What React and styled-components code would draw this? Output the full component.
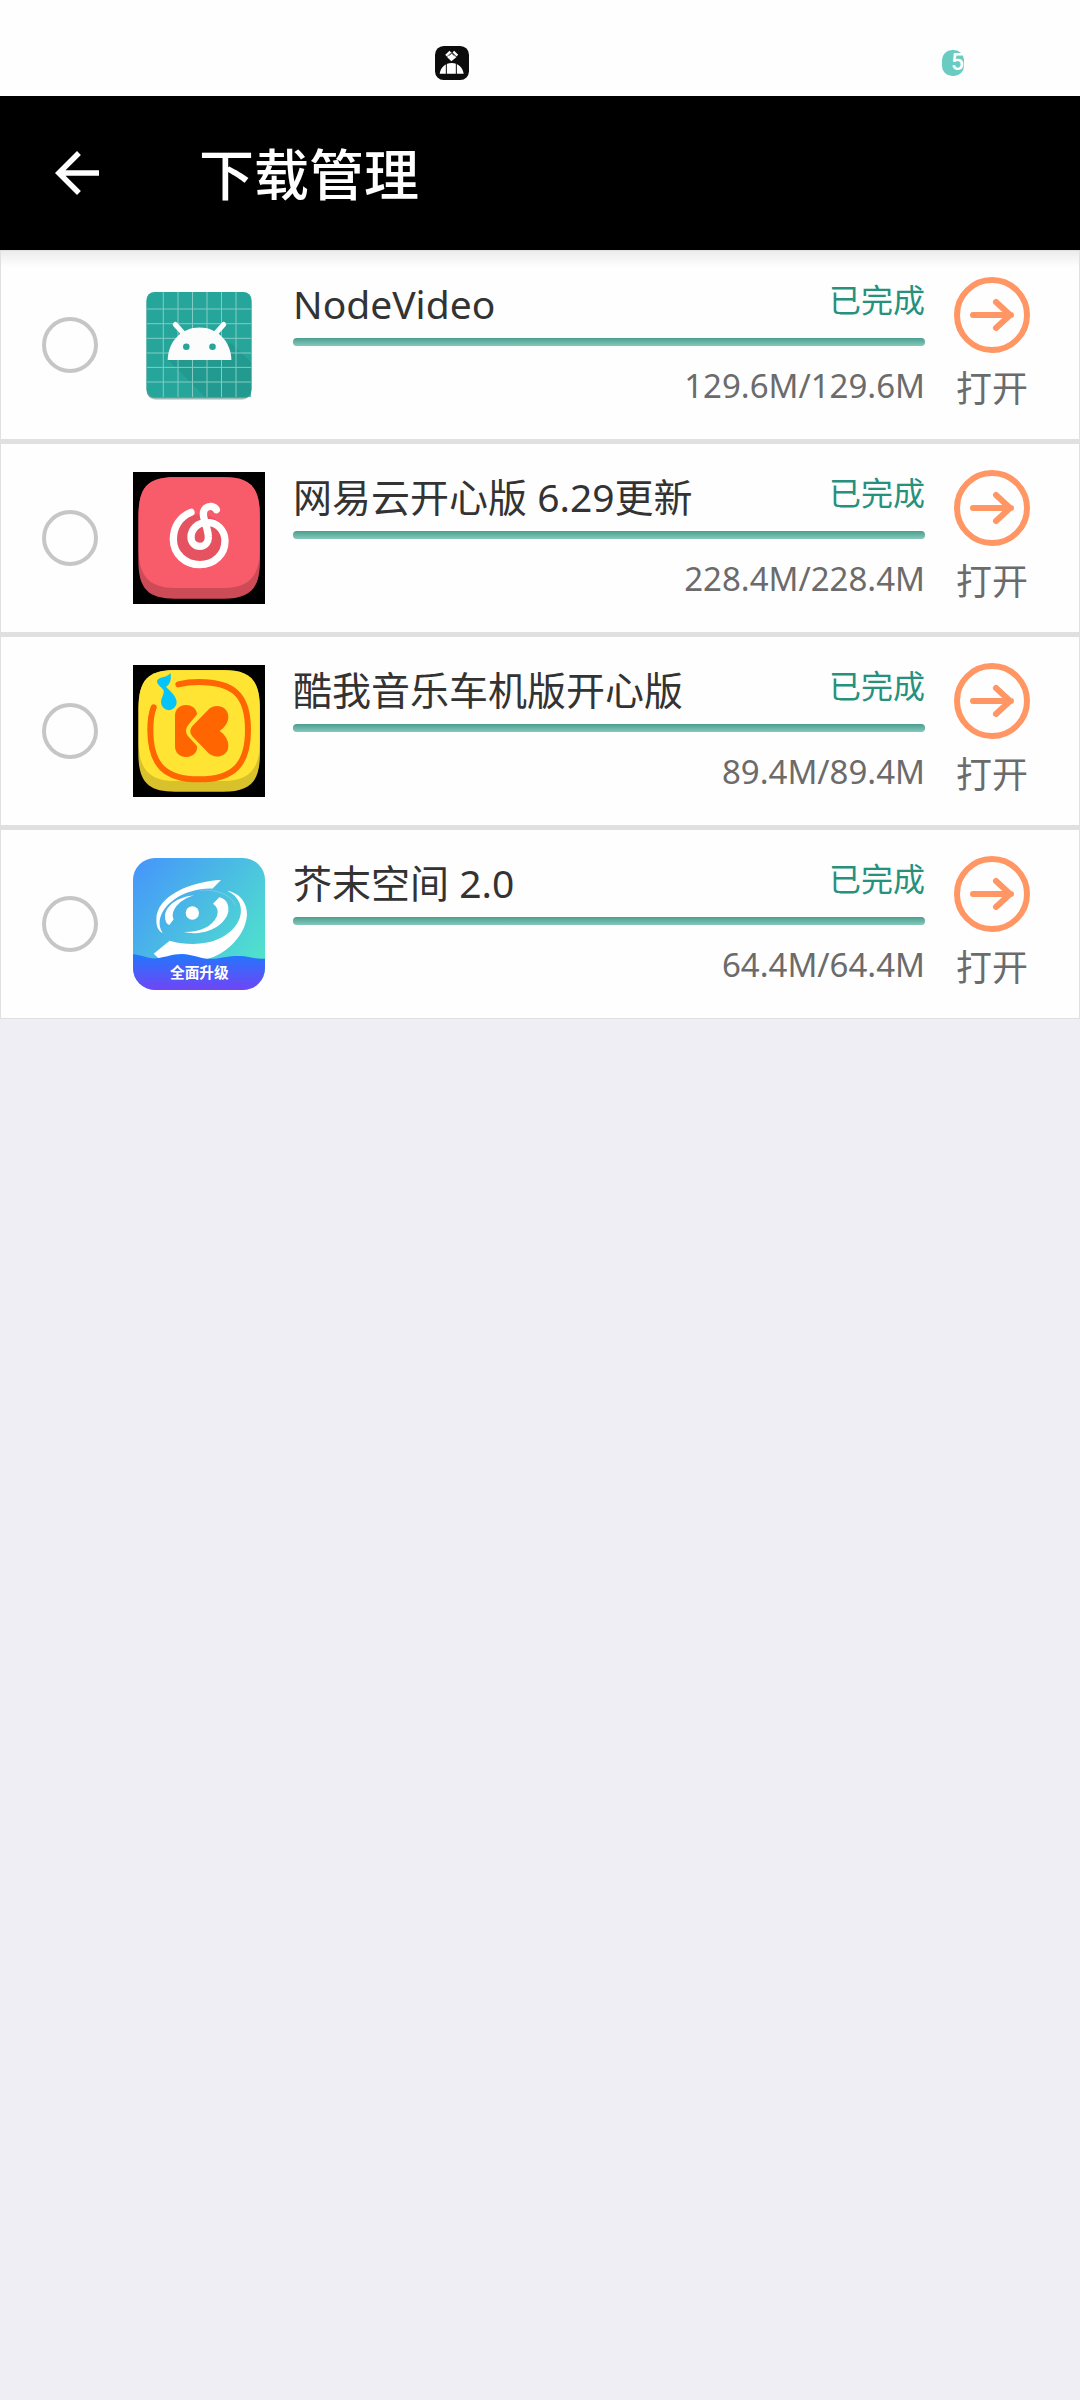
import { useState } from "react"
import styled, { createGlobalStyle } from "styled-components"

const downloads = [
    { id: "nodevideo", nome: "NodeVideo", size: "129.6M", Icon: NodeVideoIcon },
    { id: "netease", nome: "网易云开心版 6.29更新", size: "228.4M", Icon: NeteaseIcon },
    { id: "kuwo", nome: "酷我音乐车机版开心版", size: "89.4M", Icon: KuwoIcon },
    { id: "jiemo", nome: "芥末空间 2.0", size: "64.4M", Icon: JiemoIcon },
]

export default function App() {
    return (
        <>
            <GlobalStyle />
            <StatusBar>
                <NotificationIcon />
                <Battery>5</Battery>
            </StatusBar>
            <Header>
                <BackButton aria-label="返回">
                    <svg width="66" height="66" viewBox="0 0 24 24" fill="#ffffff">
                        <path d="M20 11H7.83l5.59-5.59L12 4l-8 8 8 8 1.41-1.41L7.83 13H20v-2z" />
                    </svg>
                </BackButton>
                <Title>下载管理</Title>
            </Header>
            <List>
                {downloads.map((item) => <DownloadItem key={item.id} {...item} />)}
            </List>
        </>
    )
}

function DownloadItem({ id, nome, size, Icon }) {
    const [checked, setChecked] = useState(false)

    return (
        <Item>
            <Check
                type="checkbox"
                aria-labelledby={id}
                checked={checked}
                onChange={() => setChecked(!checked)}
            />
            <Icon />
            <Info>
                <InfoTop>
                    <Name id={id}>{nome}</Name>
                    <Status>已完成</Status>
                </InfoTop>
                <Progress value="100" max="100" aria-labelledby={id} />
                <Size>{size}/{size}</Size>
            </Info>
            <OpenButton>
                <svg width="78" height="76" viewBox="0 0 78 76" fill="none" stroke="#ff9663" strokeWidth="6" strokeLinecap="round" strokeLinejoin="round">
                    <circle cx="39" cy="38" r="35" />
                    <path d="M20 38H58M43 25L57 38L43 51" />
                </svg>
                打开
            </OpenButton>
        </Item>
    )
}

function NotificationIcon() {
    return (
        <svg width="34" height="34" viewBox="0 0 102 102">
            <rect width="102" height="102" rx="26" fill="#0c0c0c" />
            <path d="M49 19L64 34L49 46L36 33Z" fill="#ffffff" />
            <path d="M33 29L46 17M55 17L67 29" stroke="#ffffff" strokeWidth="7" />
            <path d="M42 29L50 21L58 29" stroke="#0c0c0c" strokeWidth="3" fill="none" />
            <path d="M14 83C17 64 31 51 50 51C69 51 83 64 86 83Z" fill="#ffffff" />
            <path d="M34 52V84M64 52V84" stroke="#0c0c0c" strokeWidth="3" />
        </svg>
    )
}

function NodeVideoIcon() {
    return (
        <AppIcon viewBox="0 0 132 132">
            <rect x="14" y="16" width="104" height="105" rx="9" fill="#000000" opacity="0.15" />
            <rect x="13.5" y="14.5" width="105" height="105" rx="8" fill="#1b7a70" opacity="0.6" />
            <rect x="13.5" y="13" width="105" height="105" rx="8" fill="#26a69a" />
            <path d="M35 81L72 118H118V83L98 64Z" fill="#22958a" opacity="0.7" />
            <path
                d="M30.3 13V118M45 13V118M59.5 13V118M74 13V118M88.5 13V118M103 13V118M14 30H118M14 44.7H118M14 59.3H118M14 74H118M14 88.4H118M14 103H118"
                stroke="#84cbc4"
            />
            <path d="M34.7 81C35 62 49 48.5 66.5 48.5S98 62 98.4 81Z" fill="#fcfcfc" />
            <path d="M42.3 45.5L51 55M90.7 45.5L82 55" stroke="#fcfcfc" strokeWidth="5" strokeLinecap="round" />
            <circle cx="53.3" cy="67.7" r="3.3" fill="#26a69a" />
            <circle cx="79.5" cy="67.7" r="3.3" fill="#26a69a" />
        </AppIcon>
    )
}

function NeteaseIcon() {
    return (
        <AppIcon viewBox="39 36 396 396">
            <rect x="39" y="36" width="396" height="396" fill="#000000" />
            <path d="M55 170C55 80 85 51 165 51H310C390 51 420 80 420 170V300C420 388 390 416 310 416H165C85 416 55 388 55 300Z" fill="#cd4b57" />
            <path d="M56 165C56 80 85 52 165 52H310C390 52 419 80 419 165V270C419 350 385 384 310 384H165C90 384 56 350 56 270Z" fill="#f85c6b" />
            <circle cx="240" cy="243" r="80" fill="#e65360" />
            <path
                d="M213 157C180 170 160 200 160 238C160 282 196 314 240 314C284 314 315 282 315 243C315 210 290 187 262 187C232 187 213 208 213 232C213 248 225 259 240 259C256 259 266 246 265 230C264 205 250 180 250 162C250 146 262 138 274 139C281 140 286 143 289 149"
                fill="none"
                stroke="#ffffff"
                strokeWidth="22"
                strokeLinecap="round"
            />
        </AppIcon>
    )
}

function KuwoIcon() {
    return (
        <AppIcon viewBox="39 45 396 396">
            <rect x="39" y="45" width="396" height="396" fill="#000000" />
            <path d="M55 179C55 89 85 60 165 60H310C390 60 420 89 420 179V309C420 397 390 425 310 425H165C85 425 55 397 55 309Z" fill="#d9c12c" />
            <path d="M56 174C56 89 85 61 165 61H310C390 61 419 89 419 174V279C419 359 385 393 310 393H165C90 393 56 359 56 279Z" fill="#ffe433" />
            <path
                d="M175 103C195 98 215 96 237 96C340 96 384 135 384 240C384 345 340 388 237 388C135 388 91 345 91 240C91 210 94 190 101 172"
                fill="none"
                stroke="#ff6500"
                strokeWidth="18"
                strokeLinecap="round"
            />
            <path d="M165 198C165 177 179 165 198 165C217 165 231 178 231 193L207 222C195 236 195 249 207 262L231 288C234 305 220 321 198 321C179 321 165 308 165 288Z" fill="#ff6500" />
            <path d="M218 227L267 177C285 160 325 167 325 201C325 220 311 234 299 243C312 252 325 267 325 287C325 320 285 328 266 310L218 260Q203 243 218 227Z" fill="#ff6500" />
            <path d="M151 68C143 84 118 78 111 92C110 106 128 112 131 122C133 132 123 144 123 157A23.5 23.5 0 1 0 170 157C170 139 153 126 138 110C149 105 156 86 151 68Z" fill="#06c4f8" />
        </AppIcon>
    )
}

function JiemoIcon() {
    return (
        <AppIcon viewBox="39 39 396 396">
            <defs>
                <linearGradient id="sky" x1="0" y1="0" x2="1" y2="0.8">
                    <stop offset="0" stopColor="#4594fc" />
                    <stop offset="1" stopColor="#50e5ca" />
                </linearGradient>
                <linearGradient id="sea" x1="0" y1="0" x2="0" y2="1">
                    <stop offset="0" stopColor="#2277fd" />
                    <stop offset="1" stopColor="#7045f5" />
                </linearGradient>
                <clipPath id="corners">
                    <rect x="39" y="39" width="396" height="396" rx="66" />
                </clipPath>
            </defs>
            <g clipPath="url(#corners)">
                <rect x="39" y="39" width="396" height="396" fill="url(#sky)" />
                <g fill="#ffffff">
                    <path d="M303 105C220 108 108 150 109 225C109 245 115 258 128 264C100 220 140 165 205 142C235 132 260 130 277 131Z" />
                    <path d="M101 326L149 287C200 302 260 300 300 280C350 255 372 215 359 175C352 158 340 146 322 137C365 145 382 180 381 210C375 280 310 330 262 342H118Z" />
                    <path d="M222 151C170 156 135 185 135 215C135 228 140 237 148 240L161 223C150 200 175 165 222 151Z" />
                    <path d="M279 176L298 157C320 162 327 180 325 200C315 245 250 275 190 261C240 262 275 245 290 215C297 198 292 185 279 176Z" />
                    <circle cx="217" cy="204" r="20" />
                </g>
                <path d="M240 136C290 132 335 150 345 180" fill="none" stroke="#ffffff" strokeWidth="2" opacity="0.3" />
                <path d="M39 328C65 330 85 342 110 340C140 336 155 327 185 327C225 328 245 345 285 341C315 337 330 332 360 333C390 334 405 343 435 341V435H39Z" fill="url(#sea)" />
                <IconText x="238" y="400" textAnchor="middle">全面升级</IconText>
            </g>
        </AppIcon>
    )
}

const GlobalStyle = createGlobalStyle`
    * {
        box-sizing: border-box;
    }
    body {
        margin: 0;
        background-color: #efeef4;
        font-family: "Noto Sans", "Noto Sans CJK SC", sans-serif;
    }
    button {
        padding: 0;
        border: none;
        background: none;
        font-family: inherit;
        cursor: pointer;
    }
    svg {
        display: block;
    }
`
const StatusBar = styled.div`
    display: flex;
    justify-content: space-between;
    align-items: center;
    height: 96px;
    padding: 30px 116px 0 435px;
    background-color: #fefefe;
`
const Battery = styled.span`
    width: 22px;
    height: 26px;
    border-radius: 10px;
    background-color: #6accc1;
    color: #ffffff;
    font-family: Roboto, sans-serif;
    font-size: 23px;
    font-weight: 500;
    line-height: 26px;
    text-align: right;
`
const Header = styled.header`
    display: flex;
    align-items: center;
    gap: 89px;
    height: 154px;
    padding: 0 44px;
    background-color: #000000;
`
const BackButton = styled.button`
    width: 66px;
    height: 66px;
`
const Title = styled.h1`
    margin: 0;
    padding-top: 2px;
    color: #ffffff;
    font-size: 55px;
    font-weight: 500;
    line-height: 80px;
`
const List = styled.ul`
    margin: 0;
    padding: 0;
    border: 1px solid #e0e0e0;
    list-style: none;
    background-color: #fefefe;
    background-image: linear-gradient(#ececec, #fefefe);
    background-size: 100% 16px;
    background-repeat: no-repeat;
`
const Item = styled.li`
    display: flex;
    align-items: center;
    gap: 28px;
    padding: 0 48px 0 41px;
    & + & {
        border-top: 5px solid #e0e0e0;
    }
`
const Check = styled.input`
    appearance: none;
    flex-shrink: 0;
    width: 56px;
    height: 56px;
    margin: 0 7px 0 0;
    border: 4px solid #c6c6c6;
    border-radius: 50%;
    cursor: pointer;
    &:checked {
        background-color: #26917d;
    }
`
const AppIcon = styled.svg`
    flex-shrink: 0;
    width: 132px;
    height: 132px;
`
const IconText = styled.text`
    fill: #ffffff;
    font-size: 44px;
    font-weight: 700;
`
const Info = styled.div`
    flex: 1;
    min-width: 0;
    padding: 23px 0 29px;
`
const InfoTop = styled.div`
    display: flex;
    justify-content: space-between;
    align-items: flex-start;
    height: 64px;
`
const Name = styled.span`
    color: #333333;
    font-size: 39px;
    line-height: 60px;
`
const Status = styled.span`
    color: #26917d;
    font-size: 32px;
    line-height: 52px;
`
const Progress = styled.progress`
    appearance: none;
    display: block;
    width: 100%;
    height: 8px;
    border: none;
    &::-webkit-progress-bar {
        border-radius: 4px;
        background-color: #e0e0e0;
    }
    &::-webkit-progress-value {
        border-radius: 4px;
        background-image: linear-gradient(#4a9e8f, #85c9bb);
    }
`
const Size = styled.div`
    margin-top: 16px;
    color: #6b6b6b;
    font-size: 33px;
    line-height: 48px;
    text-align: right;
`
const OpenButton = styled.button`
    display: flex;
    flex-direction: column;
    align-items: center;
    gap: 12px;
    width: 78px;
    color: #6b6b6b;
    font-size: 36px;
    line-height: 48px;
    white-space: nowrap;
`
